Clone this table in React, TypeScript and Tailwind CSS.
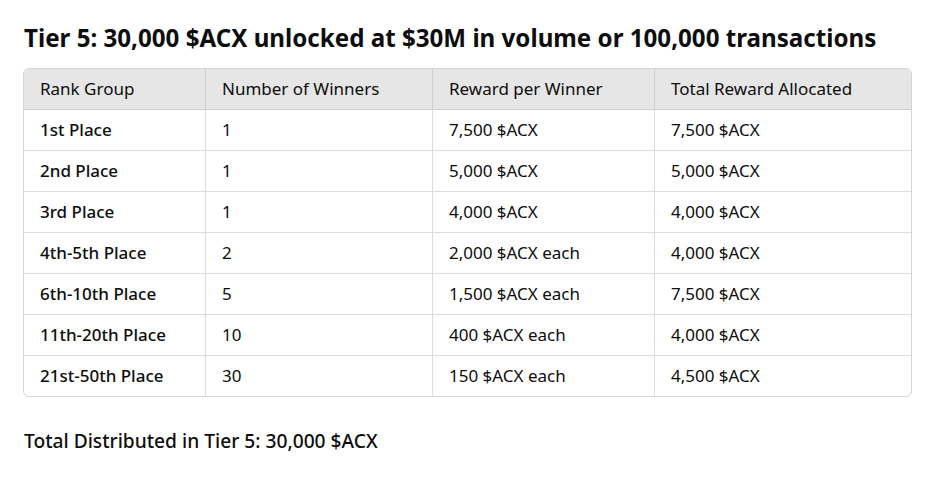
import React from "react";

const rows = [
  ["1st Place", "1", "7,500 $ACX", "7,500 $ACX"],
  ["2nd Place", "1", "5,000 $ACX", "5,000 $ACX"],
  ["3rd Place", "1", "4,000 $ACX", "4,000 $ACX"],
  ["4th-5th Place", "2", "2,000 $ACX each", "4,000 $ACX"],
  ["6th-10th Place", "5", "1,500 $ACX each", "7,500 $ACX"],
  ["11th-20th Place", "10", "400 $ACX each", "4,000 $ACX"],
  ["21st-50th Place", "30", "150 $ACX each", "4,500 $ACX"],
];

const headers = ["Rank Group", "Number of Winners", "Reward per Winner", "Total Reward Allocated"];

export default function App() {
  return (
    <div
      className="min-h-[478px] w-[945px] bg-white text-[#0d0d0d]"
      style={{ fontFamily: '"Noto Sans", "Open Sans", sans-serif' }}
    >
      <div className="pl-[24px] pt-[23px]">
        <h2 className="text-[24.15px] leading-[30px] font-bold">
          Tier 5: 30,000 $ACX unlocked at $30M in volume or 100,000 transactions
        </h2>
      </div>
      <div className="ml-[23px] mt-[15px] w-[889px] overflow-hidden rounded-md border border-[#d4d4d4]">
        <div className="grid grid-cols-[182px_227px_222px_256px] bg-[#e6e6e6] border-b border-[#cfcfcf]">
          {headers.map((h, i) => (
            <div
              key={h}
              className={`h-[40px] flex items-center px-4 text-[17px] ${i < 3 ? "border-r border-[#cfcfcf]" : ""}`}
            >
              {h}
            </div>
          ))}
        </div>
        {rows.map((r, ri) => (
          <div
            key={ri}
            className={`grid grid-cols-[182px_227px_222px_256px] ${ri < rows.length - 1 ? "border-b border-[#dddddd]" : ""}`}
          >
            {r.map((c, i) => (
              <div
                key={i}
                className={`h-[40px] flex items-center px-4 text-[17px] ${i === 0 ? "font-medium" : ""} ${i < 3 ? "border-r border-[#dddddd]" : ""}`}
              >
                {c}
              </div>
            ))}
          </div>
        ))}
      </div>
      <div className="pl-[24px] mt-[32px] text-[19.2px] leading-[24px] font-medium">
        Total Distributed in Tier 5: 30,000 $ACX
      </div>
    </div>
  );
}
